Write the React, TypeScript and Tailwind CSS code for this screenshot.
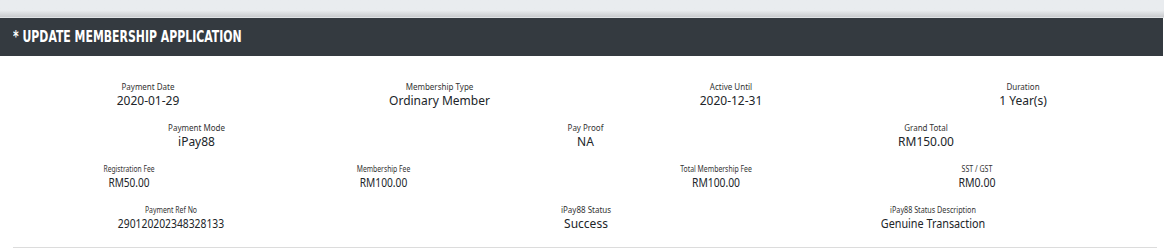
import React from "react"

type Field = { label: string; value: string; squeeze?: string }

const rows: { cols: string; fields: Field[] }[] = [
  {
    cols: "grid-cols-[296px_287px_296px_288px]",
    fields: [
      { label: "Payment Date", value: "2020-01-29" },
      { label: "Membership Type", value: "Ordinary Member" },
      { label: "Active Until", value: "2020-12-31" },
      { label: "Duration", value: "1 Year(s)" },
    ],
  },
  {
    cols: "grid-cols-[393px_385px_296px]",
    fields: [
      { label: "Payment Mode", value: "iPay88" },
      { label: "Pay Proof", value: "NA" },
      { label: "Grand Total", value: "RM150.00" },
    ],
  },
  {
    cols: "grid-cols-[258px_251px_414px_108px]",
    fields: [
      { label: "Registration Fee", value: "RM50.00", squeeze: "scale-x-[0.84]" },
      { label: "Membership Fee", value: "RM100.00", squeeze: "scale-x-[0.85]" },
      { label: "Total Membership Fee", value: "RM100.00", squeeze: "scale-x-[0.86]" },
      { label: "SST / GST", value: "RM0.00", squeeze: "scale-x-[0.88]" },
    ],
  },
  {
    cols: "grid-cols-[342px_488px_206px]",
    fields: [
      { label: "Payment Ref No", value: "290120202348328133", squeeze: "scale-x-[0.86]" },
      { label: "iPay88 Status", value: "Success" },
      { label: "iPay88 Status Description", value: "Genuine Transaction", squeeze: "scale-x-[0.9]" },
    ],
  },
]

export default function App() {
  return (
    <main className="w-[1164px] h-[249px] overflow-hidden bg-white font-['Noto_Sans',sans-serif]">
      {/* barra superior */}
      <div className="h-[18px] bg-gradient-to-b from-[#e9ecef] from-60% to-[#c9cbce] border-b border-[#dfe2e5]" />

      <div className="h-[38px] bg-[#343a40] flex items-center pl-[13px] mr-[1px]">
        <h2 className="origin-left scale-x-[0.735] whitespace-nowrap text-white font-bold text-[16.5px] uppercase font-['DejaVu_Sans_Condensed','DejaVu_Sans',sans-serif]">
          * Update Membership Application
        </h2>
      </div>

      <div className="pt-[25px]">
        {rows.map((row, i) => (
          <div key={i} className={`grid ${row.cols} h-[41px]`}>
            {row.fields.map((f) => (
              <div key={f.label} className={`flex flex-col items-center text-center whitespace-nowrap ${f.squeeze ?? ""}`}>
                <span className="text-[8px] leading-[12px] text-[#333]">{f.label}</span>
                <span className="text-[12px] leading-[16px] text-[#212529]">{f.value}</span>
              </div>
            ))}
          </div>
        ))}
        <hr className="mt-[2px] ml-[13px] mr-[7px] border-t border-[#dcdcdc]" />
      </div>
    </main>
  )
}
